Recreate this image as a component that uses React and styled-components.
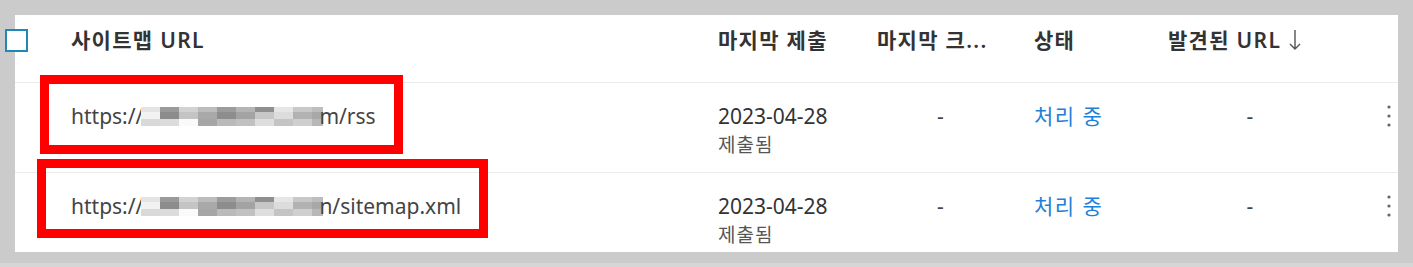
import React from 'react'
import styled, { createGlobalStyle } from 'styled-components'

const GlobalStyle = createGlobalStyle`
  html, body {
    margin: 0;
    padding: 0;
    background: #cbcbcb;
  }
  body {
    font-family: "Noto Sans", "Noto Sans CJK KR", sans-serif;
    color: #333;
  }
`

const Page = styled.div`
  position: relative;
  width: 1413px;
  height: 267px;
  padding: 15px 15px 0 15px;
  box-sizing: border-box;
  background: #cbcbcb;
  border-bottom: 4px solid #d6d6d6;
`

const Panel = styled.div`
  background: #fff;
  height: 237px;
  clip-path: inset(0 0 0 -20px);
`

const COLS = '41px 647px 159px 157px 134px 194px 51px'

const HeaderRow = styled.div`
  display: grid;
  grid-template-columns: ${COLS};
  height: 68px;
  box-sizing: border-box;
  padding-top: 13px;
  border-bottom: 1px solid #ebebeb;
  align-items: start;
`

const Row = styled.div`
  display: grid;
  grid-template-columns: ${COLS};
  height: 90px;
  box-sizing: border-box;
  padding-top: 21px;
  border-bottom: 1px solid #ebebeb;
  align-items: start;
`

const Cell = styled.div`
  padding: 0 15px;
  line-height: 24px;
  font-size: 21px;
  white-space: nowrap;
  display: flex;
  flex-direction: column;
  align-items: ${p => (p.$center ? 'center' : 'flex-start')};
`

const HeadCell = styled(Cell)`
  font-weight: 600;
  color: #333;
  letter-spacing: 1.3px;
  flex-direction: row;
  align-items: center;
  gap: 8px;
`

const CheckCell = styled.div`
  display: flex;
  height: 24px;
  align-items: center;
`

const Checkbox = styled.span`
  display: block;
  width: 23px;
  height: 23px;
  margin-left: -10px;
  box-sizing: border-box;
  border: 2px solid #1e88b8;
  background: #fff;
`

const UrlText = styled.span`
  display: flex;
  align-items: center;
  color: #444;
`

const Date = styled.span`
  color: #333;
`

const SubText = styled.span`
  color: #555;
  font-size: 19px;
  letter-spacing: 1px;
  line-height: 22px;
  margin-top: 6px;
`

const Status = styled.span`
  color: #1e80d8;
  letter-spacing: 1.5px;
`

const Dash = styled.span`
  color: #444;
`

const MenuCell = styled.div`
  display: flex;
  justify-content: flex-end;
  padding-right: 7px;
  height: 24px;
  align-items: center;
`

const Mark = styled.div`
  position: absolute;
  box-sizing: border-box;
  border: 9px solid #ff0000;
  left: ${p => p.$x}px;
  top: ${p => p.$y}px;
  width: ${p => p.$w}px;
  height: ${p => p.$h}px;
`

const shades = [
  ['#e4e4e4', '#9a9a9a', '#d2d2d2', '#bcbcbc', '#9c9c9c', '#b4b4b4', '#8f8f8f', '#e6e6e6', '#c8c8c8', '#bdbdbd'],
  ['#f2f2f2', '#8c8c8c', '#c4c4c4', '#a9a9a9', '#8d8d8d', '#a3a3a3', '#c7c7c7', '#dcdcdc', '#b2b2b2', '#a8a8a8'],
  ['#d9d9d9', '#dcdcdc', '#fafafa', '#a6a6a6', '#bababa', '#c1c1c1', '#dedede', '#c4c4c4', '#cfcfcf', '#b8b8b8'],
]

function Blur() {
  return (
    <svg width="182" height="19" viewBox="0 0 182 19" style={{ margin: '0 -4px 0 -2px' }}>
      {shades.map((row, r) =>
        row.map((c, i) => (
          <rect key={r + '-' + i} x={i * 19} y={r === 0 ? 0 : r === 1 ? 5 : 12} width="19" height={r === 0 ? 5 : 7} fill={c} />
        ))
      )}
    </svg>
  )
}

function Kebab() {
  return (
    <svg width="4" height="22" viewBox="0 0 4 22">
      <circle cx="2" cy="2" r="1.6" fill="#666" />
      <circle cx="2" cy="11" r="1.6" fill="#666" />
      <circle cx="2" cy="20" r="1.6" fill="#666" />
    </svg>
  )
}

function DownArrow() {
  return (
    <svg width="12" height="22" viewBox="0 0 12 22">
      <path d="M6 1 V20 M1 15 L6 20 L11 15" fill="none" stroke="#555" strokeWidth="1.4" />
    </svg>
  )
}

const rows = [
  { tail: 'm/rss', date: '2023-04-28' },
  { tail: 'n/sitemap.xml', date: '2023-04-28' },
]

export default function App() {
  return (
    <Page>
      <GlobalStyle />
      <Panel>
        <HeaderRow>
          <CheckCell>
            <Checkbox />
          </CheckCell>
          <HeadCell>사이트맵 URL</HeadCell>
          <HeadCell>마지막 제출</HeadCell>
          <HeadCell>마지막 크...</HeadCell>
          <HeadCell>상태</HeadCell>
          <HeadCell>
            발견된 URL
            <DownArrow />
          </HeadCell>
          <div />
        </HeaderRow>
        {rows.map((r, i) => (
          <Row key={i}>
            <div />
            <Cell>
              <UrlText>
                https://
                <Blur />
                {r.tail}
              </UrlText>
            </Cell>
            <Cell>
              <Date>{r.date}</Date>
              <SubText>제출됨</SubText>
            </Cell>
            <Cell $center>
              <Dash>-</Dash>
            </Cell>
            <Cell>
              <Status>처리 중</Status>
            </Cell>
            <Cell $center>
              <Dash>-</Dash>
            </Cell>
            <MenuCell>
              <Kebab />
            </MenuCell>
          </Row>
        ))}
      </Panel>
      <Mark $x={40} $y={75} $w={363} $h={79} />
      <Mark $x={37} $y={159} $w={451} $h={79} />
    </Page>
  )
}
